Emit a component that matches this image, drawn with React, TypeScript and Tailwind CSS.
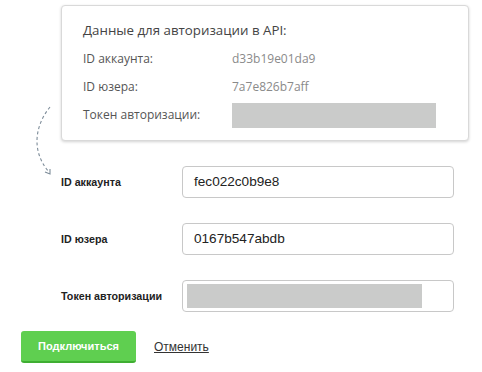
import React from 'react'

const cardRows = [
  { label: 'ID аккаунта:', value: 'd33b19e01da9' },
  { label: 'ID юзера:', value: '7a7e826b7aff' },
]

function Field({ label, value, masked }: { label: string; value?: string; masked?: boolean }) {
  return (
    <div className="flex items-center h-[32px]">
      <span className="w-[121px] text-[10.7px] font-bold text-[#222] font-['Liberation_Sans',Arial,sans-serif]">
        {label}
      </span>
      <div className="w-[272px] h-[32px] rounded-[4px] border border-[#c8c8c8] bg-white flex items-center px-[4px]">
        {masked ? (
          <div className="w-[235px] h-[24px] bg-[#cacbca]" />
        ) : (
          <span className="pl-[7px] text-[13.6px] text-[#222] font-['Liberation_Sans',Arial,sans-serif]">{value}</span>
        )}
      </div>
    </div>
  )
}

export default function App() {
  return (
    <div className="relative w-[482px] h-[372px] bg-white overflow-hidden">
      {/* API credentials card */}
      <div className="ml-[61px] mt-[5px] w-[408px] h-[136px] rounded-[4px] border border-[#d9d9d9] bg-white shadow-[0_1px_3px_rgba(0,0,0,0.18)] pl-[21px] pt-[14px] font-['Open_Sans',sans-serif]">
        <div className="text-[13.3px] leading-[20px] text-[#444]">Данные для авторизации в API:</div>
        <div className="mt-[9px] flex flex-col gap-[8px]">
          {cardRows.map((r) => (
            <div key={r.label} className="flex items-center h-[20px] text-[12px]">
              <span className="w-[149px] text-[#555]">{r.label}</span>
              <span className="text-[#8a8a8a]">{r.value}</span>
            </div>
          ))}
          <div className="flex items-center h-[20px] text-[12px]">
            <span className="w-[149px] text-[#555]">Токен авторизации:</span>
            <div className="w-[204px] h-[25px] bg-[#cacbca]" />
          </div>
        </div>
      </div>

      {/* dashed arrow */}
      <svg className="absolute left-[28px] top-[100px]" width="30" height="80" viewBox="0 0 30 80">
        <path d="M22 7 C8 24 2 50 21 72" fill="none" stroke="#7d8c99" strokeWidth="1.1" strokeDasharray="3 2.5" />
        <path d="M17 72 L22 74 L22 69" fill="none" stroke="#7d8c99" strokeWidth="1.1" />
      </svg>

      {/* form */}
      <div className="ml-[61px] mt-[25px] flex flex-col gap-[25px]">
        <Field label="ID аккаунта" value="fec022c0b9e8" />
        <Field label="ID юзера" value="0167b547abdb" />
        <Field label="Токен авторизации" masked />
      </div>

      <div className="ml-[21px] mt-[19px] flex items-center gap-[18px] font-['Liberation_Sans',Arial,sans-serif]">
        <button className="w-[115px] h-[32px] rounded-[3px] bg-[#5fcf50] border-b-2 border-[#3fae32] text-white text-[11px] font-bold">
          Подключиться
        </button>
        <a className="text-[12px] text-[#333] underline">Отменить</a>
      </div>
    </div>
  )
}
